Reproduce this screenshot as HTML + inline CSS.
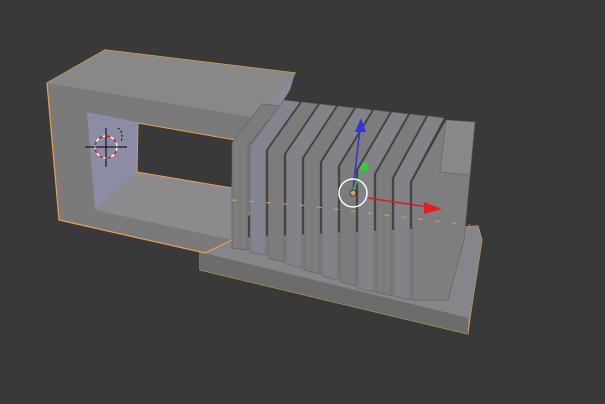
<!DOCTYPE html>
<html><head><style>html,body{margin:0;padding:0;background:#393939;width:605px;height:404px;overflow:hidden}</style></head>
<body>
<svg width="605" height="404" viewBox="0 0 605 404" xmlns="http://www.w3.org/2000/svg">
<rect width="605" height="404" fill="#393939"/>
<!-- base plate -->
<polygon points="200,250 210,240 478,226 482,240 470,318 468,334 200,270" fill="#7d7d7d" stroke="#e0a050" stroke-width="1"/>
<polygon points="200,252 468,318 468,334 200,270" fill="#6c6c6c"/>
<polygon points="210,240 478,226 482,240 470,318 200,252" fill="#85858a"/>
<!-- left frame outer -->
<polygon points="47,83 105,50 295,73 258,140 258,200 232,240 205,253 59,220" fill="#7a7a7a" stroke="#e8a050" stroke-width="1.2"/>
<polygon points="47,83 105,50 295,73 258,118" fill="#888888"/>
<polygon points="258,118 295,73 290,90 258,140" fill="#8a8a98"/>
<!-- interior -->
<polygon points="87,112 137,122 137,172 95,210" fill="#8c8ca4"/>
<polygon points="95,210 137,172 232,188 232,240" fill="#8b8b8e"/>
<polygon points="138,123 235,140 232,188 137,172" fill="#393939" stroke="#e8a050" stroke-width="1"/>
<!-- fins -->
<g stroke="#5e5e5e" stroke-width="0.6">
<polygon points="232,143 262,104 280,106 248,146 248,250 232,248" fill="#7c7c7c"/>
<polygon points="250,146 284,100 300,102 266,150 266,255 250,252" fill="#848490"/>
<polygon points="268,150 302,102 318,104 284,154 284,262 268,258" fill="#7c7c7c"/>
<polygon points="286,154 320,104 336,106 302,158 302,268 286,264" fill="#828288"/>
<polygon points="304,158 338,106 354,108 320,162 320,274 304,270" fill="#7c7c7c"/>
<polygon points="322,162 356,108 372,110 338,166 338,280 322,276" fill="#828288"/>
<polygon points="340,166 374,110 390,112 356,170 356,286 340,282" fill="#7c7c7c"/>
<polygon points="358,170 392,112 408,114 374,174 374,292 358,288" fill="#828288"/>
<polygon points="376,174 410,114 426,116 392,178 392,296 376,292" fill="#7c7c7c"/>
<polygon points="394,178 428,116 444,118 410,182 410,300 394,296" fill="#828288"/>
<polygon points="412,182 446,120 475,122 464,240 448,300 412,300" fill="#7e7e7e"/>
<polygon points="446,120 475,122 470,175 440,172" fill="#888888"/>
</g>
<polyline points="232,200 300,205 470,225" fill="none" stroke="#e0a050" stroke-width="1" stroke-dasharray="5,12"/>
<!-- gizmo -->
<line x1="353" y1="190" x2="360" y2="128" stroke="#3030d0" stroke-width="1.5"/>
<polygon points="355,132 361,118 366,132" fill="#3333ee"/>
<line x1="353" y1="190" x2="364" y2="168" stroke="#30c030" stroke-width="1.5"/>
<rect x="361" y="163" width="7" height="7" fill="#30d030" transform="rotate(30 364 167)"/>
<line x1="368" y1="198" x2="428" y2="207" stroke="#d02020" stroke-width="1.5"/>
<polygon points="424,202 442,209 424,214" fill="#e02020"/>
<circle cx="353" cy="193" r="14" fill="none" stroke="#fff" stroke-width="1.5"/>
<circle cx="353" cy="193" r="3" fill="#e0a060" stroke="#222" stroke-width="0.8"/>
<!-- 3D cursor -->
<circle cx="106" cy="147" r="11" fill="none" stroke="#d02020" stroke-width="1.5"/>
<circle cx="106" cy="147" r="11" fill="none" stroke="#fff" stroke-width="1.5" stroke-dasharray="4,4"/>
<line x1="85" y1="147" x2="127" y2="147" stroke="#000" stroke-width="1"/>
<line x1="106" y1="128" x2="106" y2="167" stroke="#000" stroke-width="1"/>
<path d="M118,128 q6,4 3,14" fill="none" stroke="#000" stroke-width="1" stroke-dasharray="2,2"/>
</svg>
</body></html>
